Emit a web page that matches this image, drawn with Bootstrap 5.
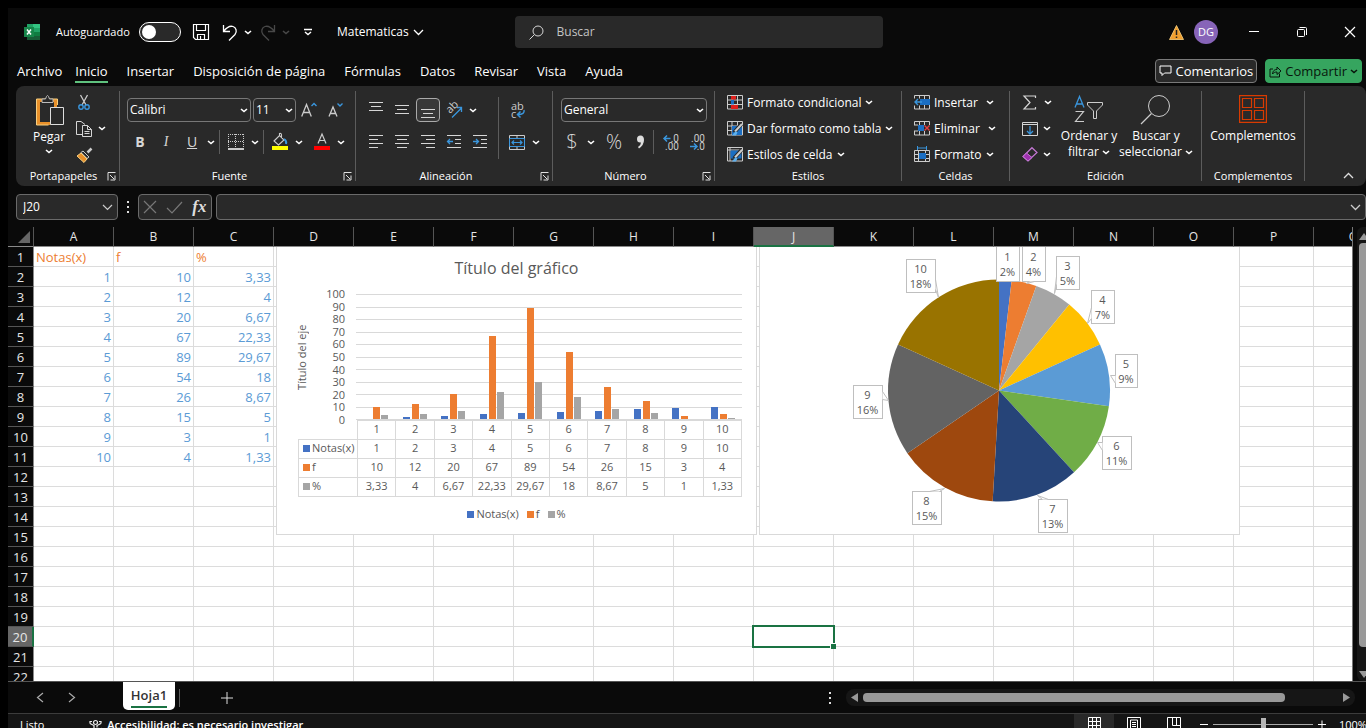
<!DOCTYPE html>
<html lang="es">
<head>
<meta charset="utf-8">
<meta name="viewport" content="width=device-width, initial-scale=1">
<title>Matematicas - Excel</title>
<link href="https://cdn.jsdelivr.net/npm/bootstrap@5.3.0/dist/css/bootstrap.min.css" rel="stylesheet">
<style>
:root{--app:#0a0a0a;--panel:#292929;--line:#6a6a6a;--grid:#dcdcdc;--green:#1a7343}
body{font-family:"Open Sans","Noto Sans",sans-serif;font-size:12px;line-height:16px;background:#000;color:#fff;height:100vh;overflow:hidden;padding:8px 0 0 8px}
.app{background:var(--app);min-height:0}
svg{display:block;flex:none;overflow:visible}
.ico{fill:none;stroke:#d6d6d6;stroke-width:1}
button{color:inherit;background:none;border:0;padding:0;font:inherit}
.chev{width:8px;height:5px;fill:none;stroke:#fff;stroke-width:2}
/* title bar */
.titlebar{height:48px}
.title-left{flex:0 0 37.3%;padding-left:16px}
.autolabel{font-size:11px;width:83px}
.switch-auto{appearance:none;width:42px;height:20px;border:1px solid #fff;border-radius:10px;background:#292929;position:relative;margin:0}
.switch-auto::before{content:"";position:absolute;left:2px;top:2px;width:14px;height:14px;border-radius:50%;background:#fff}
.searchbox{flex:0 0 27.1%;height:32px;background:var(--panel);border-radius:4px;padding:0 14px}
.searchbox input{background:none;border:0;outline:0;color:#fff;font-size:12px;padding:0;margin-left:13px}
.searchbox input::placeholder{color:#c4c4c4;opacity:1}
.avatar{width:24px;height:24px;border-radius:50%;background:#8764b8;font-size:11px;margin-left:10px}
.winbtns{gap:28px;margin-left:26px;padding-right:6px}
.winbtns button{width:20px;height:20px}
/* tabs */
.menutabs{height:30px;padding:0 4px 0 9px}
.menutabs nav{gap:19px}
.menutabs a{color:#fff;text-decoration:none;font-size:13px;line-height:20px;padding:2px 0 0;border-bottom:2px solid transparent}
.menutabs a.first{margin-right:-6px}
.menutabs a.current{border-color:#5fc27e}
.btn-top{height:24px;border-radius:4px;font-size:13px;padding:0 3px;border:1px solid #7a7a7a;background:var(--panel);gap:3px}
.btn-share{background:#36a55f;border-color:#36a55f;color:#08150c}
/* ribbon */
.ribbon{height:100px;background:var(--panel);border-radius:8px;margin-left:8px}
.rgroup{flex:none;height:100px}
.rbody{height:80px}
.rows3{padding-top:3px}
.rows3 button{height:26px;flex:none;padding-top:1px}
.rows2{padding-top:11px;gap:6px}
.rlabel{height:20px;font-size:11px;line-height:20px}
.rlabel svg{position:absolute;right:3px;top:6px}
.rsep{width:1px;height:90px;margin-top:5px;background:#5c5c5c;flex:none}
.ssep{width:1px;height:24px;background:#5c5c5c;flex:none;margin:0 3px 0 2px}
.tb{width:26px;height:26px;display:flex;align-items:center;justify-content:center;flex:none}
.tc{width:12px;height:26px;display:flex;align-items:center;justify-content:center;flex:none}
.glyph{font-size:14px;color:#d6d6d6}
.boxed{border:1px solid #aaa;border-radius:4px;background:#383838;width:24px;height:24px;margin:0 1px}
.combo{appearance:none;height:24px;border:1px solid #777;border-radius:4px;color:#fff;font-size:12px;line-height:20px;padding:0 2px;background:var(--panel) url("data:image/svg+xml,%3Csvg xmlns='http://www.w3.org/2000/svg' width='8' height='5'%3E%3Cpath d='M1 1l3 2.5L7 1' fill='none' stroke='%23fff' stroke-width='1.6'/%3E%3C/svg%3E") no-repeat right 2px center}
.w-font{width:124px;margin-right:2px}.w-size{width:43px}.w-num{width:146px;margin-left:2px}
.w-clip{width:103px}.w-fuente{width:235px}.w-alin{width:196px}.w-numero{width:161px}.w-est{width:186px}.w-cel{width:107px}.w-edi{width:191px}.w-comp{width:102px}
.bigbtn{padding-top:9px;display:flex;flex-direction:column;align-items:center;justify-content:flex-start;white-space:nowrap}
.bigbtn .chev{display:inline;vertical-align:middle}
.dec{font:10px Roboto,sans-serif;fill:#ccc}
/* formula bar */
.fbar{padding:8px 0 7px 8px;height:41px}
.fbox{height:26px;background:var(--panel);border:1px solid #6a6a6a;border-radius:4px}
.fbox input{background:none;border:0;outline:0;color:#fff;font-size:12px;padding:0 0 0 6px;width:100%;min-width:0}
.namebox{width:102px}
.fxbox{width:74px}
.fxicon{font:italic bold 17px "Liberation Serif",serif;color:#ddd}
/* sheet */
.sheetwrap{position:relative;overflow:hidden;background:#fff;border-right:1px solid #777;min-width:0}
.sheet{border-collapse:separate;border-spacing:0;table-layout:fixed;width:1386px;font-size:13px;line-height:18px}
.sheet th,.sheet td{height:20px;padding:1px 2px 0 3px;font-weight:400;overflow:hidden;white-space:nowrap}
.sheet td{border-right:1px solid var(--grid);border-bottom:1px solid var(--grid);color:#5b9bd5;text-align:right}
.sheet td.head{color:#ed7d31;text-align:left;padding-left:2px}
.sheet th{background:var(--app);color:#e6e6e6;text-align:center;padding:1px 0 0}
.sheet thead th{border-right:1px solid #555;border-bottom:1px solid #8a8a8a;font-size:12px}
.sheet thead th.sel{background:#666;border-bottom:2px solid var(--green);line-height:17px}
.sheet tbody th{border-bottom:1px solid #555;border-right:1px solid #8a8a8a}
.sheet tbody th.sel{background:#666;border-right:2px solid var(--green)}
.sheet .c-row{width:26px}
.sheet thead .corner svg{margin:0 3px 0 auto}
td.active{position:relative;overflow:visible!important}
td.active::before{content:"";position:absolute;inset:-2px;border:2px solid var(--green)}
td.active::after{content:"";position:absolute;right:-3px;bottom:-3px;width:6px;height:6px;background:var(--green);border:solid #fff;border-width:1px 0 0 1px}
.chart{position:absolute;top:20px;width:481px;height:288px;background:#fff;border:1px solid #d9d9d9;border-top:0;color:#595959;overflow:hidden}
.chart-bars{left:268px}
.chart-pie{left:751px}
.chart h2{font-size:16px;line-height:24px;margin:0;padding:9px 0 0 0}
.plotrow{padding:14px 0 0 17px}
.axis-title{writing-mode:vertical-rl;transform:rotate(180deg);font-size:11px}
.ylabels{width:21px;margin:0 11px 0 14px;font-size:11px}
.ylabels span{height:0;line-height:0}
.plot{height:126px}
.dtable{table-layout:fixed;border-collapse:collapse;width:444px;margin-left:21px;font-size:11px;line-height:16px;text-align:center}
.dtable td,.dtable th{border:1px solid #d9d9d9;height:19px;padding:0 0 2px;font-weight:400;white-space:nowrap}
.dtable thead th:first-child{border-color:transparent #d9d9d9 #d9d9d9 transparent;width:59px}
.dtable tbody th{text-align:left;padding-left:4px}
.legend-row{font-size:11px;padding-top:9px}
.key{display:inline-block;width:7px;height:7px;margin-right:2px}
.k1{background:#4472c4}.k2{background:#ed7d31}.k3{background:#a5a5a5}
.vscroll{width:13px;background:var(--app);padding:0 0 0 4px;overflow:hidden;flex:none}
.vtrack{width:16px;height:100%;background:#161616;border-radius:6px;padding:6px 0 3px 2px}
.vthumb{width:12px;height:404px;background:#999;border-radius:4px;margin:3px 0 auto}
/* sheet tabs + status */
.tabbar{height:33px;border-top:1px solid #555;border-bottom:1px solid #3c3c3c;padding-left:28px}
.hoja{height:28px;width:52px;background:#fff;color:#333;border-radius:0 0 5px 5px;font-size:13px;font-weight:600;align-self:flex-start;margin-left:47px}
.hoja span{border-bottom:2px solid var(--green);line-height:22px}
.htrack{width:509px;height:17px;border-radius:8px;background:#161616;padding:0 5px;margin-right:11px;margin-left:14px}
.hthumb{height:9px;border-radius:4px;background:#999;width:422px;margin-left:5px}
.status{height:14px;overflow:hidden;background:#151515;font-size:11px;line-height:21px;padding-left:12px}
.status>*{height:20px}
.viewbtn{width:40px;height:20px;display:flex;justify-content:center;padding-top:3px}
.viewbtn.on{background:#292929}
.zoomr{appearance:none;width:100px;height:20px;background:linear-gradient(#aaa,#aaa) no-repeat 0 10px/100% 1px;margin:0 5px}
.zoomr::-webkit-slider-thumb{appearance:none;width:5px;height:12px;background:#b5b5b5}
</style>
</head>
<body class="d-flex flex-column">
<svg width="0" height="0" class="position-absolute">
  <symbol id="chev" viewBox="0 0 8 5"><path d="M1 1l3 2.500L7 1" fill="none" stroke="#fff" stroke-width="1.600"/></symbol>
  <symbol id="launch" viewBox="0 0 9 9"><path d="M1 8.500V.5h7.500M3 3l4 4M8 3.500V8H3.500" fill="none" stroke="#e0e0e0"/></symbol>
</svg>
<div class="app d-flex flex-column flex-grow-1">

<header class="titlebar d-flex align-items-center flex-shrink-0">
  <div class="title-left d-flex align-items-center">
    <svg width="16" height="16" viewBox="0 0 16 16"><path fill="#21a366" d="M3 0h6v4H3z"/><path fill="#33c481" d="M9 0h7v4H9z"/><path fill="#107c41" d="M3 4h13v8H3z"/><path fill="#185c37" d="M3 8h6v8H3z"/><path fill="#21a366" d="M9 4h7v4H9z"/><path fill="#185c37" d="M9 12h7v4H9z"/><path fill="#17864a" d="M0 3h10v10H0z"/><path stroke="#fff" stroke-width="1.500" d="M3 5.500l4 5M7 5.500l-4 5"/></svg>
    <label for="auto" class="autolabel ms-3">Autoguardado</label>
    <input class="switch-auto" type="checkbox" role="switch" id="auto">
    <button aria-label="Guardar" style="margin-left:12px"><svg class="ico" width="16" height="16" viewBox="0 0 16 16" style="stroke:#fff"><path d="M.5.5h15v15H2.500l-2-2zM3.500.5v6h9v-6M4.500 15.500v-5h7v5M7.500 12v3.500" stroke-width="1.200"/></svg></button>
    <button aria-label="Deshacer" class="d-flex align-items-center" style="margin-left:13px;gap:6px"><svg class="ico" width="16" height="17" viewBox="0 0 16 17" style="stroke:#fff"><path d="M1.500 1v6.500H8M1.500 7.500C5 3 8 1.500 11 2.500s4.500 5 2 8L7 16.500" stroke-width="1.300"/></svg><svg class="chev"><use href="#chev"/></svg></button>
    <button aria-label="Rehacer" class="d-flex align-items-center opacity-25" style="margin-left:8px;gap:6px"><svg class="ico" width="16" height="17" viewBox="0 0 16 17" style="stroke:#fff"><path d="M14.500 1v6.500H8M14.500 7.500C11 3 8 1.500 5 2.500s-4.500 5-2 8L9 16.500" stroke-width="1.300"/></svg><svg class="chev"><use href="#chev"/></svg></button>
    <button aria-label="Personalizar" style="margin-left:14px"><svg width="8" height="7" viewBox="0 0 8 7"><path d="M0 .5h8M1 3l3 2.500L7 3" fill="none" stroke="#fff" stroke-width="1.400"/></svg></button>
    <button class="d-flex align-items-center" style="margin-left:25px;gap:4px">Matematicas<svg width="11" height="7" viewBox="0 0 11 7"><path d="M1 1l4.500 4.500L10 1" fill="none" stroke="#fff" stroke-width="1.300"/></svg></button>
  </div>
  <label class="searchbox d-flex align-items-center">
    <svg width="15" height="15" viewBox="0 0 15 15" class="ico"><circle cx="9" cy="6" r="5"/><path d="M5.500 9.500L.5 14.500"/></svg>
    <input type="search" placeholder="Buscar" aria-label="Buscar">
  </label>
  <div class="ms-auto d-flex align-items-center">
    <svg width="15" height="15" viewBox="0 0 15 15"><path d="M7.500.5L14.500 14.500H.5z" fill="#f0a030" stroke="#f8d080" stroke-width=".8"/><path d="M7.500 5v5M7.500 11.500V13" stroke="#222" stroke-width="1.500"/></svg>
    <button class="avatar text-white" aria-label="Cuenta">DG</button>
    <div class="winbtns d-flex">
      <button aria-label="Minimizar"><svg width="20" height="20"><path d="M5 9.500h10" stroke="#fff"/></svg></button>
      <button aria-label="Restaurar"><svg width="20" height="20" fill="none" stroke="#fff"><rect x="5.500" y="7.500" width="7" height="7" rx="1"/><path d="M7.500 5.500H13.500q1 0 1 1V13"/></svg></button>
      <button aria-label="Cerrar"><svg width="20" height="20"><path d="M5 5l10 10M15 5L5 15" stroke="#fff" stroke-width="1.200"/></svg></button>
    </div>
  </div>
</header>

<div class="menutabs d-flex align-items-center flex-shrink-0">
  <nav class="d-flex">
    <a href="#" class="first">Archivo</a><a href="#" class="current">Inicio</a><a href="#">Insertar</a><a href="#">Disposición de página</a><a href="#">Fórmulas</a><a href="#">Datos</a><a href="#">Revisar</a><a href="#">Vista</a><a href="#">Ayuda</a>
  </nav>
  <div class="ms-auto d-flex gap-2">
    <button class="btn-top d-flex align-items-center"><svg width="13" height="12" viewBox="0 0 13 12"><path d="M1 1h11v7H5.500L3 10.500V8H1z" fill="none" stroke="#fff"/></svg>Comentarios</button>
    <button class="btn-top btn-share d-flex align-items-center"><svg width="13" height="13" viewBox="0 0 13 13"><path d="M4 4H1v8h9.500V8.500M3.500 9c.5-3.500 2-4.500 4.500-4.500V2l4 4-4 3.500V7c-2 0-3.500.5-4.500 2z" fill="none" stroke="#08150c"/></svg>Compartir<svg width="8" height="5" viewBox="0 0 8 5"><path d="M1 1l3 2.500L7 1" fill="none" stroke="#08150c" stroke-width="1.500"/></svg></button>
  </div>
</div>

<div class="ribbon d-flex flex-shrink-0 position-relative">
  <section class="rgroup w-clip">
    <div class="rbody d-flex">
      <button class="bigbtn" style="margin-left:17px"><svg width="30" height="34" viewBox="0 0 30 34"><path d="M4.500 5.500h17v23h-17z" fill="none" stroke="#e8902a" stroke-width="3"/><path d="M2.500 4h21v6M2.500 4v26h12" fill="none" stroke="#f8d080"/><path d="M8 7.500V4h3.500q1-3.500 2-3.500t2 3.500H19v3.500z" fill="#292929" stroke="#bbb"/><path d="M16.500 12.500h13v17h-13z" fill="#292929" stroke="#ddd"/></svg><span>Pegar</span><svg class="chev mt-1"><use href="#chev"/></svg></button>
      <div class="rows3 d-flex flex-column" style="margin-left:11px">
        <button aria-label="Cortar" class="d-flex align-items-center"><svg width="16" height="17" viewBox="0 0 16 17"><path d="M4.500 1l5.500 10M11.500 1L6 11" stroke="#ccc" stroke-width="1.300"/><g fill="none" stroke="#3a96dd" stroke-width="1.400"><circle cx="5" cy="13" r="2.200"/><circle cx="11" cy="13" r="2.200"/></g></svg></button>
        <button aria-label="Copiar" class="d-flex align-items-center"><svg width="16" height="16" viewBox="0 0 16 16" class="ico"><path d="M7 13.500H.5V.5h4.500l4 3"/><path d="M6.500 4.500h5l4 4v7h-9zM11.500 4.500v4h4M8.500 10.500h5M8.500 12.500h5"/></svg><svg class="chev" style="margin-left:6px"><use href="#chev"/></svg></button>
        <button aria-label="Copiar formato" class="d-flex align-items-center"><svg width="17" height="16" viewBox="0 0 17 16"><path d="M15.500 1.500l-4 4" stroke="#ccc" stroke-width="2.500"/><path d="M7 4l6 6-2 1.500-6-6z" fill="#292929" stroke="#ccc"/><path d="M5 6l6 6-3 3.500L1 9z" fill="#e8902a" stroke="#f8d080"/></svg></button>
      </div>
    </div>
    <div class="rlabel text-center position-relative"><span class="me-2">Portapapeles</span><svg width="9" height="9"><use href="#launch"/></svg></div>
  </section>
  <div class="rsep"></div>
  <section class="rgroup w-fuente">
    <div class="rbody rows2 d-flex flex-column" style="padding-left:7px">
      <div class="d-flex align-items-center">
        <select class="combo w-font" aria-label="Fuente"><option>Calibri</option></select>
        <select class="combo w-size" aria-label="Tamaño"><option>11</option></select>
        <button class="tb" aria-label="Aumentar fuente"><svg width="16" height="16" viewBox="0 0 16 16"><path d="M.7 14.500L5.500 2.500l4.800 12M2.500 10.500h6" fill="none" stroke="#ccc" stroke-width="1.300"/><path d="M10.500 4L13 1.500 15.500 4" fill="none" stroke="#3a96dd" stroke-width="1.400"/></svg></button>
        <button class="tb" aria-label="Disminuir fuente"><svg width="16" height="16" viewBox="0 0 16 16"><path d="M2 14.500L6 5l4 9.500M3.500 11.500h5" fill="none" stroke="#ccc" stroke-width="1.300"/><path d="M10.500 1.500L13 4l2.500-2.500" fill="none" stroke="#3a96dd" stroke-width="1.400"/></svg></button>
      </div>
      <div class="d-flex align-items-center">
        <button class="tb glyph fw-bold" aria-label="Negrita">B</button><button class="tb glyph fst-italic" aria-label="Cursiva" style="font-family:'Liberation Serif',serif">I</button><button class="tb glyph text-decoration-underline" aria-label="Subrayado">U</button><button class="tc" aria-label="Más subrayados"><svg class="chev"><use href="#chev"/></svg></button>
        <span class="ssep"></span>
        <button class="tb" aria-label="Bordes"><svg width="16" height="16" viewBox="0 0 16 16"><path d="M.5 0v14M7.500 0v14M15.500 0v14M0 .5h16M0 7.500h16" stroke="#ccc" stroke-dasharray="1 1"/><path d="M0 15h16" stroke="#fff" stroke-width="1.500"/></svg></button><button class="tc" aria-label="Más bordes"><svg class="chev"><use href="#chev"/></svg></button>
        <span class="ssep"></span>
        <button class="tb" aria-label="Color de relleno"><svg width="16" height="18" viewBox="0 0 16 18"><path d="M2 8l5.500-5.500 4.500 4.500-5.500 5zM7.500 2.500V0.500q2-.5 2 1.500v3" fill="none" stroke="#ccc" stroke-width="1.100"/><path d="M12 6q3 2 2 5" fill="none" stroke="#3a96dd" stroke-width="2"/><path d="M0 13h16v4H0z" fill="#ff0"/></svg></button><button class="tc" aria-label="Más rellenos"><svg class="chev"><use href="#chev"/></svg></button>
        <button class="tb ms-1" aria-label="Color de fuente"><svg width="16" height="18" viewBox="0 0 16 18"><path d="M4 10.500L8 1l4 9.500M5.500 7.500h5" fill="none" stroke="#ccc" stroke-width="1.200"/><path d="M0 13h16v4H0z" fill="#f00"/></svg></button><button class="tc" aria-label="Más colores"><svg class="chev"><use href="#chev"/></svg></button>
      </div>
    </div>
    <div class="rlabel text-center position-relative"><span class="me-3">Fuente</span><svg width="9" height="9"><use href="#launch"/></svg></div>
  </section>
  <div class="rsep"></div>
  <section class="rgroup w-alin">
    <div class="rbody d-flex" style="padding-left:7px">
      <div class="rows2 d-flex flex-column">
        <div class="d-flex align-items-center">
          <button class="tb" aria-label="Arriba"><svg class="ico" width="14" height="16"><path d="M0 .5h14M2 4.500h10M0 8.500h14"/></svg></button>
          <button class="tb" aria-label="Medio"><svg class="ico" width="14" height="16"><path d="M0 3.500h14M2 7.500h10M0 11.500h14"/></svg></button>
          <button class="tb boxed" aria-label="Abajo"><svg class="ico" width="14" height="16"><path d="M0 7.500h14M2 11.500h10M0 15.500h14"/></svg></button>
          <button class="tb" aria-label="Orientación"><svg width="17" height="17" viewBox="0 0 17 17"><path d="M6 15.500L15.500 6M11 5.500h4.500V10" fill="none" stroke="#3a96dd" stroke-width="1.300"/><text transform="translate(4 12) rotate(-45)" font-size="11" fill="#ccc">ab</text></svg></button><button class="tc" aria-label="Más orientación"><svg class="chev"><use href="#chev"/></svg></button>
        </div>
        <div class="d-flex align-items-center">
          <button class="tb" aria-label="Izquierda"><svg class="ico" width="14" height="14"><path d="M0 .5h14M0 4.500h9M0 8.500h14M0 12.500h9"/></svg></button>
          <button class="tb" aria-label="Centro"><svg class="ico" width="14" height="14"><path d="M0 .5h14M2 4.500h10M0 8.500h14M2 12.500h10"/></svg></button>
          <button class="tb" aria-label="Derecha"><svg class="ico" width="14" height="14"><path d="M0 .5h14M5 4.500h9M0 8.500h14M5 12.500h9"/></svg></button>
          <button class="tb" aria-label="Disminuir sangría"><svg class="ico" width="14" height="14"><path d="M0 .5h14M8 4.500h6M8 8.500h6M0 12.500h14"/><path d="M6 6.500H.5M3 4L.5 6.500 3 9" style="stroke:#3a96dd;stroke-width:1.300"/></svg></button>
          <button class="tb" aria-label="Aumentar sangría"><svg class="ico" width="14" height="14"><path d="M0 .5h14M8 4.500h6M8 8.500h6M0 12.500h14"/><path d="M0 6.500h5.500M3 4l2.500 2.500L3 9" style="stroke:#3a96dd;stroke-width:1.300"/></svg></button>
        </div>
      </div>
      <span class="ssep" style="height:62px;margin:11px 5px 0"></span>
      <div class="rows2 d-flex flex-column">
        <button class="tb" aria-label="Ajustar texto"><svg width="15" height="17" viewBox="0 0 15 17"><text x="1" y="8" font-size="11" fill="#ccc">ab</text><text x="1" y="16" font-size="11" fill="#ccc">c</text><path d="M14 8q1 4.500-6 4.500M10.500 9.500l-3 3 3 3" fill="none" stroke="#3a96dd" stroke-width="1.500"/></svg></button>
        <div class="d-flex"><button class="tb" aria-label="Combinar"><svg width="16" height="15" viewBox="0 0 16 15"><path d="M.5.5h15v14H.5zM8 .5v3M8 11.500v3" fill="none" stroke="#ccc"/><path d="M.5 3.500h15v8H.5z" fill="none" stroke="#3a96dd"/><path d="M3 7.500h10M5 5.500l-2 2 2 2M11 5.500l2 2-2 2" fill="none" stroke="#3a96dd" stroke-width="1.200"/></svg></button><button class="tc" aria-label="Más combinar"><svg class="chev"><use href="#chev"/></svg></button></div>
      </div>
    </div>
    <div class="rlabel text-center position-relative"><span class="me-3">Alineación</span><svg width="9" height="9"><use href="#launch"/></svg></div>
  </section>
  <div class="rsep"></div>
  <section class="rgroup w-numero">
    <div class="rbody rows2 d-flex flex-column" style="padding-left:6px">
      <div class="d-flex align-items-center" style="height:26px"><select class="combo w-num" aria-label="Formato de número"><option>General</option></select></div>
      <div class="d-flex align-items-center">
        <button class="tb glyph fs-5 fw-light" aria-label="Moneda">$</button><button class="tc me-1" aria-label="Más monedas"><svg class="chev"><use href="#chev"/></svg></button>
        <button class="tb glyph fs-5 fw-light" aria-label="Porcentaje">%</button><button class="tb" aria-label="Millares"><svg width="9" height="14" viewBox="0 0 9 14"><path d="M1 4q0-3.500 3.500-3.500T8 5q0 5-5 8.500L2 12q3-2 3-4.500Q1 8 1 4z" fill="#ddd"/></svg></button>
        <span class="ssep mx-0 me-1"></span>
        <button class="tb" aria-label="Aumentar decimales"><svg width="16" height="17" viewBox="0 0 16 17"><path d="M7.500 4.500H1M4 1.500l-3 3 3 3" fill="none" stroke="#3a96dd" stroke-width="1.500"/><g class="dec" text-anchor="end"><text x="16" y="8">.0</text><text x="16" y="16">.00</text></g></svg></button>
        <button class="tb" aria-label="Disminuir decimales"><svg width="16" height="17" viewBox="0 0 16 17"><path d="M1 12.500h6.500M5 9.500l3 3-3 3" fill="none" stroke="#3a96dd" stroke-width="1.500"/><g class="dec" text-anchor="end"><text x="16" y="8">.00</text><text x="16" y="16">.0</text></g></svg></button>
      </div>
    </div>
    <div class="rlabel text-center position-relative"><span class="me-3">Número</span><svg width="9" height="9"><use href="#launch"/></svg></div>
  </section>
  <div class="rsep"></div>
  <section class="rgroup w-est">
    <div class="rbody rows3 d-flex flex-column align-items-start" style="padding-left:12px">
      <button class="d-flex align-items-center gap-1"><svg width="16" height="15" viewBox="0 0 16 15"><path d="M.5.500h15v13.500H.5zM0 5h16M0 9.500h16M5 0v14M10.500 0v14" fill="none" stroke="#ccc"/><path d="M4 1h5v3.500H4zM4 10h7v4H4z" fill="#e0201c"/><path d="M4 5h3v4.500H4z" fill="#1b6ec2"/></svg>Formato condicional<svg class="chev"><use href="#chev"/></svg></button>
      <button class="d-flex align-items-center gap-1"><svg width="16" height="15" viewBox="0 0 16 15"><path d="M.5.500h15v13.500H.5zM0 5h16M0 9.500h16M5 0v14M10.500 0v14" fill="none" stroke="#ccc"/><path d="M5 5h10v9H5z" fill="#1b6ec2"/><path d="M14.500 3L7 11.500" stroke="#292929" stroke-width="4"/><path d="M15 3L8 10.500" stroke="#ccc" stroke-width="2"/><path d="M8.500 10L5 14.500h4l1.500-3z" fill="#5db0ee"/></svg>Dar formato como tabla<svg class="chev"><use href="#chev"/></svg></button>
      <button class="d-flex align-items-center gap-1"><svg width="16" height="15" viewBox="0 0 16 15"><path d="M.5.500h15v13.500H.5zM0 3h16M3 0v14" fill="none" stroke="#ccc"/><path d="M3.500 3.500h11v8h-11z" fill="#1b6ec2"/><path d="M14.500 3L7 11.500" stroke="#292929" stroke-width="4"/><path d="M15 3L8 10.500" stroke="#ccc" stroke-width="2"/><path d="M8.500 10L5 14.500h4l1.500-3z" fill="#5db0ee"/></svg>Estilos de celda<svg class="chev"><use href="#chev"/></svg></button>
    </div>
    <div class="rlabel text-center">Estilos</div>
  </section>
  <div class="rsep"></div>
  <section class="rgroup w-cel">
    <div class="rbody rows3 d-flex flex-column align-items-start" style="padding-left:12px">
      <button class="d-flex align-items-center gap-1"><svg width="16" height="15" viewBox="0 0 16 15"><path d="M.5.500h15v13.500H.5zM5.500 0v14M10.500 0v14" fill="none" stroke="#ccc"/><path d="M6 4h10v6H6z" fill="#1b6ec2"/><path d="M0 3.500h6v7H0z" fill="#292929"/><path d="M8 7H1M4 4L1 7l3 3" fill="none" stroke="#3a96dd" stroke-width="1.400"/></svg>Insertar<svg class="chev ms-1"><use href="#chev"/></svg></button>
      <button class="d-flex align-items-center gap-1"><svg width="16" height="15" viewBox="0 0 16 15"><path d="M.5 4V.5h15V4M.5 10v4h15v-4M5.500 0v4M10.500 0v4M5.500 10v4M10.500 10v4M0 4h4M0 10h4" fill="none" stroke="#ccc"/><path d="M4 4h6v6H4z" fill="#1b6ec2"/><path d="M10.500 4.500l5 5M15.500 4.500l-5 5" stroke="#e84040" stroke-width="1.400"/></svg>Eliminar<svg class="chev ms-1"><use href="#chev"/></svg></button>
      <button class="d-flex align-items-center gap-1"><svg width="16" height="17" viewBox="0 0 16 17"><path d="M.5 4.500h15v11H.5zM0 8.500h16M0 12.500h16M4.500 4v12M11.500 4v12" fill="none" stroke="#ccc"/><path d="M5 7h7v6H5z" fill="#1b6ec2"/><path d="M3.500 0v4M12.500 0v4M3.500 2h9" stroke="#3a96dd"/></svg>Formato<svg class="chev"><use href="#chev"/></svg></button>
    </div>
    <div class="rlabel text-center">Celdas</div>
  </section>
  <div class="rsep"></div>
  <section class="rgroup w-edi">
    <div class="rbody d-flex">
      <div class="rows3 d-flex flex-column" style="margin-left:12px">
        <button aria-label="Autosuma" class="d-flex align-items-center" style="gap:6px"><svg class="ico" width="16" height="15" viewBox="0 0 16 15"><path d="M13.500 3V1H2l6 6.500L2 14h11.500v-2" stroke-width="1.200"/></svg><svg class="chev"><use href="#chev"/></svg></button>
        <button aria-label="Rellenar" class="d-flex align-items-center" style="gap:5px"><svg class="ico" width="16" height="14" viewBox="0 0 16 14"><path d="M.5.5h15v13H.5zM0 2.500h16"/><path d="M8 4v8M5 9l3 3 3-3" style="stroke:#3a96dd;stroke-width:1.300"/></svg><svg class="chev"><use href="#chev"/></svg></button>
        <button aria-label="Borrar" class="d-flex align-items-center" style="gap:5px"><svg width="16" height="15" viewBox="0 0 16 15"><path d="M10 .7L15 5.500 6 14 1 9.500z" fill="#292929" stroke="#c678d6" stroke-width="1.200"/><path d="M4.500 6L10 10.500 6 14 1 9.500z" fill="#a030b0" stroke="#c678d6"/></svg><svg class="chev"><use href="#chev"/></svg></button>
      </div>
      <button class="bigbtn" style="width:56px;margin-left:9px"><svg width="32" height="33" viewBox="0 0 32 33" fill="none"><path d="M2 12.500L6.500 1.500 11 12.500M3.500 9h6" stroke="#3a96dd" stroke-width="1.300"/><path d="M2.500 16.500h8l-8 10h8.500" stroke="#ccc" stroke-width="1.200"/><path d="M14.500 7.500h15v2.500l-6 6v7.500h-3V16l-6-6z" stroke="#ccc"/></svg><span>Ordenar y<br>filtrar <svg class="chev"><use href="#chev"/></svg></span></button>
      <button class="bigbtn" style="width:76px;margin-left:1px"><svg width="34" height="33" viewBox="0 0 34 33" fill="none" stroke="#ccc"><circle cx="20" cy="11" r="10.500"/><path d="M12.500 18.500L2 29" stroke-width="1.300"/></svg><span>Buscar y<br>seleccionar <svg class="chev"><use href="#chev"/></svg></span></button>
    </div>
    <div class="rlabel text-center">Edición</div>
  </section>
  <div class="rsep"></div>
  <section class="rgroup w-comp">
    <div class="rbody"><button class="bigbtn w-100"><svg width="28" height="33" viewBox="0 0 28 33" fill="none" stroke="#d83b01" stroke-width="1.200"><path d="M.6.600h26.800v26.800H.6zM3.500 3.500h9v9h-9zM15.500 3.500h9v9h-9zM3.500 15.500h9v9h-9zM15.500 15.500h9v9h-9z"/></svg>Complementos</button></div>
    <div class="rlabel text-center">Complementos</div>
  </section>
  <div class="rsep"></div>
  <button class="ms-auto align-self-end" aria-label="Contraer" style="padding:0 12px 7px"><svg width="11" height="7"><path d="M1 6l4.500-4.500L10 6" fill="none" stroke="#ddd" stroke-width="1.300"/></svg></button>
</div>

<div class="fbar d-flex align-items-center flex-shrink-0">
  <div class="fbox namebox d-flex align-items-center"><input value="J20" aria-label="Cuadro de nombres"><svg width="11" height="7" class="me-1"><path d="M1 1l4.500 4.500L10 1" fill="none" stroke="#ccc" stroke-width="1.200"/></svg></div>
  <svg width="20" height="12"><path d="M9 0h2v2H9zM9 5h2v2H9zM9 10h2v2H9z" fill="#ddd"/></svg>
  <div class="fbox fxbox d-flex align-items-center justify-content-around">
    <button aria-label="Cancelar"><svg width="14" height="14"><path d="M1 1l12 12M13 1L1 13" stroke="#777" stroke-width="1.200"/></svg></button>
    <button aria-label="Introducir"><svg width="17" height="13"><path d="M1 7l5 5L16 1" fill="none" stroke="#777" stroke-width="1.200"/></svg></button>
    <button aria-label="Insertar función" class="fxicon">fx</button>
  </div>
  <div class="fbox flex-grow-1 ms-1 d-flex align-items-center"><input aria-label="Barra de fórmulas"><svg width="11" height="7" class="me-1"><path d="M1 1l4.500 4.500L10 1" fill="none" stroke="#ccc" stroke-width="1.300"/></svg></div>
</div>

<main class="d-flex flex-grow-1" style="min-height:0">
  <div class="sheetwrap flex-grow-1">
    <table class="sheet"><thead><tr id="cols"></tr></thead><tbody id="cells"></tbody></table>

    <section class="chart chart-bars">
      <h2 class="text-center fw-normal">Título del gráfico</h2>
      <div class="plotrow d-flex">
        <div class="axis-title text-center">Título del eje</div>
        <div class="ylabels d-flex flex-column justify-content-between text-end plot" id="yl"></div>
        <svg id="plot" width="386" height="126"></svg>
      </div>
      <table class="dtable"><thead><tr id="dh"><th></th></tr></thead><tbody id="db"></tbody></table>
      <div class="legend-row d-flex justify-content-center gap-2"><span><i class="key k1"></i>Notas(x)</span><span><i class="key k2"></i>f</span><span><i class="key k3"></i>%</span></div>
    </section>

    <section class="chart chart-pie"><svg id="pie" width="479" height="287" viewBox="0 0 479 287"></svg></section>
  </div>
  <div class="vscroll"><div class="vtrack d-flex flex-column"><svg width="10" height="7"><path d="M0 7L5 0l5 7z" fill="#999"/></svg><div class="vthumb"></div><svg width="10" height="7"><path d="M0 0h10L5 7z" fill="#999"/></svg></div></div>
</main>

<div class="tabbar d-flex align-items-center flex-shrink-0">
  <button aria-label="Hoja anterior"><svg width="8" height="11"><path d="M7 1L1.500 5.500 7 10" fill="none" stroke="#aaa" stroke-width="1.200"/></svg></button>
  <button aria-label="Hoja siguiente" style="margin-left:24px"><svg width="8" height="11"><path d="M1 1l5.500 4.500L1 10" fill="none" stroke="#aaa" stroke-width="1.200"/></svg></button>
  <button class="hoja"><span class="d-inline-block">Hoja1</span></button>
  <span class="ssep ms-1" style="height:18px"></span>
  <button aria-label="Hoja nueva" style="margin-left:38px"><svg width="12" height="12"><path d="M6 0v12M0 6h12" stroke="#ddd"/></svg></button>
  <svg class="ms-auto" width="4" height="12"><path d="M1 0h2v2H1zM1 5h2v2H1zM1 10h2v2H1z" fill="#ddd"/></svg>
  <div class="htrack d-flex align-items-center"><svg width="7" height="9"><path d="M7 0v9L0 4.500z" fill="#999"/></svg><div class="hthumb"></div><svg class="ms-auto" width="7" height="9"><path d="M0 0v9l7-4.500z" fill="#999"/></svg></div>
</div>

<footer class="status d-flex flex-shrink-0">
  <span>Listo</span>
  <svg width="15" height="14" viewBox="0 0 15 14" style="margin:3px 3px 0 45px"><g fill="none" stroke="#eee" stroke-width="1.200"><circle cx="6.500" cy="2.500" r="2"/><path d="M1 3.500l4 2v3L3 13M12 3.500L8 5.500v2M1 3.500v-2h2M12 3.500v-2h-2M9 8l4 5M13 8l-4 5"/></g></svg>
  <span class="fw-semibold">Accesibilidad: es necesario investigar</span>
  <div class="ms-auto d-flex">
    <button class="viewbtn on" aria-label="Normal"><svg width="13" height="13" fill="none" stroke="#fff"><path d="M.5.5h12v12H.5zM4.500 0v13M8.500 0v13M0 4.500h13M0 8.500h13"/></svg></button>
    <button class="viewbtn" aria-label="Diseño de página"><svg width="14" height="13" fill="none" stroke="#fff"><path d="M.5.500h13v13H.5zM3.500 3h7v10h-7zM5 5.500h4M5 7.500h4M5 9.500h4"/></svg></button>
    <button class="viewbtn" aria-label="Salto de página"><svg width="14" height="13" fill="none" stroke="#fff"><path d="M.5.500h13v13H.5zM5.500 0v8.500h8M9.500 0v8"/></svg></button>
    <button aria-label="Alejar" style="margin-left:6px"><svg width="8" height="20"><path d="M0 10.500h8" stroke="#fff"/></svg></button>
    <input class="zoomr" type="range" min="0" max="100" value="50" aria-label="Zoom">
    <button aria-label="Acercar"><svg width="8" height="20"><path d="M0 10.500h8M4 6.500v8" stroke="#fff"/></svg></button>
    <span style="margin-left:13px;width:27px">100%</span>
  </div>
</footer>
</div>

<script src="https://cdn.jsdelivr.net/npm/bootstrap@5.3.0/dist/js/bootstrap.bundle.min.js"></script>
<script>
const notas=[1,2,3,4,5,6,7,8,9,10];
const f=[10,12,20,67,89,54,26,15,3,4];
const pct=['3,33','4','6,67','22,33','29,67','18','8,67','5','1','1,33'];
const letters='ABCDEFGHIJKLMNOPQ'.split('');

// Sheet grid
document.getElementById('cols').innerHTML='<th class="c-row corner"><svg width="12" height="12"><path d="M12 0v12H0z" fill="#666"/></svg></th>'+
  letters.map(l=>`<th${l==='J'?' class="sel"':''}>${l}</th>`).join('');
let rows='';
for(let r=1;r<=22;r++){
  rows+=`<tr><th${r===20?' class="sel"':''}>${r}</th>`;
  letters.forEach((l,c)=>{
    let v='',k='';
    if(r===1&&c<3){v=['Notas(x)','f','%'][c];k=' class="head"';}
    else if(r>1&&r<12&&c<3)v=[notas,f,pct][c][r-2];
    if(r===20&&l==='J')k=' class="active"';
    rows+=`<td${k}>${v}</td>`;
  });
  rows+='</tr>';
}
document.getElementById('cells').innerHTML=rows;

// Clustered bars
let p='',y='';
for(let i=10;i>=0;i--)y+=`<span>${i*10}</span>`;
document.getElementById('yl').innerHTML=y;
for(let i=0;i<=10;i++){const gy=Math.round(i*12.5)+.5;p+=`<path d="M0 ${gy}h386" stroke="#d9d9d9"/>`;}
notas.forEach((n,i)=>{
  const x=Math.round(i*38.5)+8,vals=[n,f[i],parseFloat(pct[i].replace(',','.'))];
  ['#4472c4','#ed7d31','#a5a5a5'].forEach((c,k)=>{
    const h=Math.floor(vals[k]*1.25);
    if(vals[k]>1)p+=`<rect x="${x+k*8+(k>0?1:0)}" y="${125-h}" width="7" height="${h}" fill="${c}"/>`;
  });
});
document.getElementById('plot').innerHTML=p;
document.getElementById('dh').innerHTML+=notas.map(n=>`<th>${n}</th>`).join('');
document.getElementById('db').innerHTML=[['Notas(x)',notas,'k1'],['f',f,'k2'],['%',pct,'k3']].map(s=>
  `<tr><th><i class="key ${s[2]}"></i>${s[0]}</th>${s[1].map(v=>`<td>${v}</td>`).join('')}</tr>`).join('');

// Pie with callouts: box x, y and width, then the pointer's base start, tip and base end
const slices=['#4472c4','#ed7d31','#a5a5a5','#ffc000','#5b9bd5','#70ad47','#264478','#9e480e','#636363','#997300'];
const lab=[
  [236,1,23,null],
  [262,1,23,'274 34L266 36 269 34'],
  [296,9,23,'296 29L294 46 296 37'],
  [331,43,23,'331 60L327 76 331 71'],
  [355,107,22,'355 128L350 128 355 136'],
  [342,189,29,'342 195L337 195 342 203'],
  [278,252,29,'288 252L277 248 282 252'],
  [152,244,29,'169 244L184 241 179 244'],
  [93,138,29,'122 144L128 153 122 152'],
  [146,12,29,'175 32L178 50 175 42']];
const share=[2,4,5,7,9,11,13,15,16,18];
const cx=239,cy=143.5,R=111;let a=0,s='';
notas.forEach((n,i)=>{
  const b=a+n/55*2*Math.PI;
  s+=`<path d="M${cx} ${cy}L${cx+R*Math.sin(a)} ${cy-R*Math.cos(a)}A${R} ${R} 0 0 1 ${cx+R*Math.sin(b)} ${cy-R*Math.cos(b)}z" fill="${slices[i]}"/>`;
  a=b;
});
lab.forEach(([x,y,w,tip],i)=>{
  const top=i<2?-8:y,mx=x+w/2;
  s+=`<rect x="${x+.5}" y="${top+.5}" width="${w}" height="${y+33-top}" fill="#fff" stroke="#bfbfbf"/>`;
  if(tip)s+=`<path d="M${tip}" transform="translate(.5 .5)" fill="#fff" stroke="#bfbfbf"/>`;
  s+=`<g font-size="11" fill="#595959" text-anchor="middle"><text x="${mx}" y="${y+14-(i<2?1:0)}">${notas[i]}</text><text x="${mx}" y="${y+29-(i<2?1:0)}">${share[i]}%</text></g>`;
});
document.getElementById('pie').innerHTML=s;
</script>
</body>
</html>
